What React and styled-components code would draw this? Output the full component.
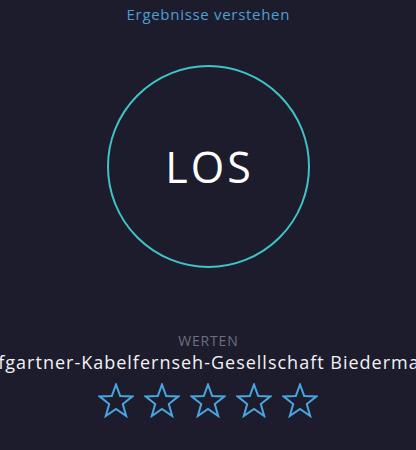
import React from "react";
import styled, { createGlobalStyle } from "styled-components";

const Global = createGlobalStyle`
  html, body { margin: 0; padding: 0; background: #1c1c2c; }
  body { overflow: hidden; font-family: "Open Sans", "Liberation Sans", sans-serif; }
`;

const Page = styled.div`
  width: 416px;
  height: 450px;
  overflow: hidden;
  display: flex;
  flex-direction: column;
  align-items: center;
  background: #1c1c2c;
`;

const Link = styled.a`
  margin-top: 3px;
  padding-left: 0.7px;
  font-size: 15px;
  line-height: 22px;
  letter-spacing: 0.7px;
  color: #4d9fd6;
  text-decoration: none;
`;

const Circle = styled.button`
  margin-top: 40px;
  width: 203px;
  height: 203px;
  border-radius: 50%;
  border: 2px solid #3fc4c6;
  background: transparent;
  color: #ffffff;
  font-family: "Open Sans", "Liberation Sans", sans-serif;
  font-size: 43px;
  font-weight: 500;
  letter-spacing: 3px;
  display: flex;
  align-items: center;
  justify-content: center;
  padding: 0 0 0 3px;
`;

const Label = styled.div`
  margin-top: 64px;
  padding-left: 0.8px;
  font-size: 14px;
  line-height: 18px;
  letter-spacing: 0.8px;
  color: #6c6f80;
`;

const NameRow = styled.div`
  width: 100%;
  display: flex;
  justify-content: center;
  white-space: nowrap;
`;

const Name = styled.div`
  font-size: 18px;
  line-height: 24px;
  letter-spacing: 1px;
  color: #f2f2f5;
`;

const Stars = styled.div`
  margin-top: 9px;
  display: flex;
  gap: 10px;
`;

const StarIcon = () => (
  <svg width="36" height="35" viewBox="0 0 36 35" fill="none">
    <polygon
      points="18,1.5 22.2,13 34.5,13.4 24.8,21 28.2,33 18,26 7.8,33 11.2,21 1.5,13.4 13.8,13"
      stroke="#4aa6e0"
      strokeWidth="2"
      strokeLinejoin="miter"
    />
  </svg>
);

export default function App() {
  return (
    <>
      <Global />
      <Page>
        <Link href="#">Ergebnisse verstehen</Link>
        <Circle>LOS</Circle>
        <Label>WERTEN</Label>
        <NameRow>
          <Name>Hofgartner-Kabelfernseh-Gesellschaft Biedermann</Name>
        </NameRow>
        <Stars>
          {[0, 1, 2, 3, 4].map((i) => (
            <StarIcon key={i} />
          ))}
        </Stars>
      </Page>
    </>
  );
}
